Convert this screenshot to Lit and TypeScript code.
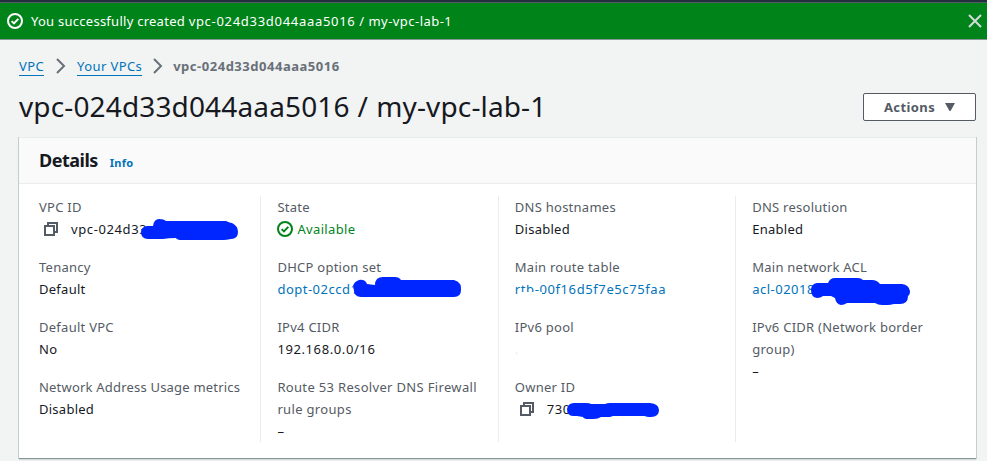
import { LitElement, html, css, nothing } from "lit";
import { customElement } from "lit/decorators.js";
import { classMap } from "lit/directives/class-map.js";

interface Field {
  label: string;
  fit?: "tight" | "wide";
  value?: string;
  kind?: "link" | "copyable" | "status" | "clipped" | "faint";
  mask?: { x: number; y: number; w: number; h: number; d: string };
}

// Each mask is drawn in its own box, offset from the top left of the value line.
const columns: Field[][] = [
  [
    {
      label: "VPC ID",
      value: "vpc-024d33",
      kind: "copyable",
      mask: {
        x: 101, y: 0, w: 100, h: 24,
        d: "M7 8H13Q14 1 19 1Q24 1 26 3H86Q90 5 92 5Q98 8 98 14Q98 21 91 21Q86 22 84 22H42Q37 22 36 20Q28 20 23 21H8Q1 21 1 14Q1 9 7 8Z",
      },
    },
    { label: "Tenancy", value: "Default" },
    { label: "Default VPC", value: "No" },
    { label: "Network Address Usage metrics", fit: "tight", value: "Disabled" },
  ],
  [
    { label: "State", value: "Available", kind: "status" },
    {
      label: "DHCP option set",
      value: "dopt-02ccd1",
      kind: "link",
      mask: {
        x: 75, y: -2, w: 112, h: 24,
        d: "M7 4Q13 3 15 8L23 9Q23 1 31 1H43Q47 1 49 4H102Q106 5 108 8Q109 9 109 14Q109 21 102 21H9Q2 21 2 14Q-1 7 7 4Z",
      },
    },
    { label: "IPv4 CIDR", value: "192.168.0.0/16" },
    { label: "Route 53 Resolver DNS Firewall rule groups", fit: "wide", value: "–" },
  ],
  [
    { label: "DNS hostnames", value: "Disabled" },
    { label: "Main route table", value: "rtb-00f16d5f7e5c75faa", kind: "clipped" },
    { label: "IPv6 pool", value: ".", kind: "faint" },
    {
      label: "Owner ID",
      value: "730",
      kind: "copyable",
      mask: {
        x: 51, y: 4, w: 96, h: 20,
        d: "M8 1H20Q24 1 25 2H39Q41 1 44 1H84Q93 2 93 8Q93 15 85 15Q80 15 79 14H47L44 15H35Q32 17 28 17H22Q18 17 17 15L11 14H7Q1 14 1 7Q2 1 8 1Z",
      },
    },
  ],
  [
    { label: "DNS resolution", value: "Enabled" },
    {
      label: "Main network ACL",
      value: "acl-02018",
      kind: "link",
      mask: {
        x: 58, y: -1, w: 104, h: 30,
        d: "M7 6H18Q20 1 25 1H48Q51 1 53 3H62Q67 3 70 7H92Q99 8 100 14Q100 18 98 19Q98 27 90 27H84Q80 28 78 28H72Q68 28 65 26H37Q34 28 31 28Q26 27 25 21L21 19H13Q11 21 7 21Q1 20 1 13Q1 7 7 6Z",
      },
    },
    { label: "IPv6 CIDR (Network border group)", value: "–" },
  ],
];

const checkIcon = html`<svg class="check" viewBox="0 0 16 16" width="16" height="16">
  <circle cx="8" cy="8" r="7" /><path d="M4.6 8.1 7 10.4 11.3 5.9" />
</svg>`;

const copyIcon = html`<svg class="copy" viewBox="0 0 14 14" width="14" height="14">
  <path d="M1 4H10V13H1ZM4 4V1H13V10H10" />
</svg>`;

const chevron = html`<svg class="chevron" viewBox="0 0 10 16" width="10" height="16">
  <path d="M1 1 8 8 1 15" />
</svg>`;

@customElement("app-root")
export class AppRoot extends LitElement {
  static styles = css`
    :host {
      display: block;
      height: 461px;
      overflow: hidden;
      background: #f2f3f3;
      color: #16191f;
      font: 13px/22px "Noto Sans", "Open Sans", sans-serif;
      letter-spacing: 0.26px;
    }
    * { box-sizing: border-box; }
    svg { display: block; fill: none; flex: none; }
    .digits { letter-spacing: 0.6px; }
    .topline { height: 3px; background: #232f3e; border-bottom: 1px solid #545b64; }
    .banner {
      height: 37px; display: flex; align-items: center; padding: 0 5px 0 7px;
      background: #00841a; border-bottom: 1px solid #879596; color: #fff;
    }
    .banner .message { flex: 1; margin-left: 8px; }
    .banner .digits { letter-spacing: 0.7px; }
    .banner .name { letter-spacing: 0.46px; }
    .check { stroke: currentColor; stroke-width: 2; }
    .close { stroke: #d5dbdb; stroke-width: 2; }
    .crumbs { display: flex; align-items: center; height: 22px; margin: 15px 19px 0; }
    .crumbs a {
      color: #0073bb; border-bottom: 1px solid #0073bb;
      line-height: 21px; height: 20px; letter-spacing: 0.4px;
    }
    .crumbs b { color: #687078; letter-spacing: 0.52px; }
    .chevron { stroke: #687078; stroke-width: 2; margin: 0 11px 0 12px; }
    .chevron ~ .chevron { margin: 0 10px 0 11px; }
    .heading { display: flex; justify-content: space-between; margin: 10px 11px 0 19px; height: 50px; }
    h1 {
      margin: 0; font-size: 28px; line-height: 38px; font-weight: 400;
      white-space: nowrap; letter-spacing: 0.14px; word-spacing: 0.6px;
    }
    button {
      width: 113px; height: 28px; margin-top: 6px; padding: 0; display: flex;
      align-items: center; justify-content: center; gap: 10px; background: #fff;
      border: 1px solid #545b64; border-radius: 2px; color: #545b64;
      font: 700 13px/20px "Noto Sans", sans-serif; letter-spacing: 0.4px;
    }
    .caret { fill: #545b64; }
    .card {
      margin: 0 11px 0 19px; height: 322px; background: #fff;
      border-top: 1px solid #eaeded; border-bottom: 1px solid #879596;
      box-shadow: -1px 0 0 #c5cccc, 1px 0 0 #c5cccc, 0 1px 1px #d5dbdb;
    }
    header {
      height: 46px; display: flex; align-items: baseline; padding: 8px 20px 0;
      background: #fafafa; border-bottom: 1px solid #eaeded;
    }
    h2 { margin: 0; font-size: 18px; line-height: 28px; letter-spacing: -0.5px; }
    .info { margin-left: 12px; color: #0073bb; font-size: 11px; font-weight: 700; }
    .grid { display: grid; grid-template-columns: repeat(4, 237.4px); padding: 12px 0 0 4px; }
    .column { height: 246px; padding: 0 16px; display: flex; flex-direction: column; gap: 16px; }
    .column + .column { border-left: 1px solid #eaeded; }
    .label { color: #545b64; }
    .tight { letter-spacing: 0.2px; }
    .wide { letter-spacing: 0.33px; margin-right: -6px; }
    .value { display: flex; align-items: center; height: 22px; position: relative; white-space: nowrap; }
    .link, .clipped { color: #0073bb; }
    .link .digits { letter-spacing: 0.5px; }
    .status { color: #00841a; gap: 4px; letter-spacing: 0.35px; }
    .copy { stroke: #545b64; stroke-width: 2; margin: 0 13px 0 5px; }
    .faint { color: #fae7d8; }
    .mask { position: absolute; fill: #0026ff; }
    .clipped::before {
      content: ""; position: absolute; left: 0; top: 3px; width: 29px; height: 4px; background: #fff;
    }
    .clipped::after {
      content: ""; position: absolute; left: 5px; top: 14px; width: 22px; height: 3px; background: #fff;
    }
  `;

  private field(f: Field) {
    const m = f.mask;
    return html`<div class="field">
      <div class=${classMap({ label: true, [f.fit ?? "regular"]: true })}>${f.label}</div>
      <div class=${classMap({ value: true, [f.kind ?? "plain"]: true })}>
        ${f.kind === "copyable" ? copyIcon : f.kind === "status" ? checkIcon : nothing}
        <span class=${classMap({ digits: /\d/.test(f.value ?? "") })}>${f.value}</span>
        ${m
          ? html`<svg class="mask" width=${m.w} height=${m.h} style="left:${m.x}px;top:${m.y}px">
              <path d=${m.d} />
            </svg>`
          : nothing}
      </div>
    </div>`;
  }

  render() {
    return html`
      <div class="topline"></div>
      <div class="banner">
        ${checkIcon}
        <span class="message">You successfully created <span class="digits">vpc-024d33d044aaa5016</span><span class="name"> / my-vpc-lab-1</span></span>
        <svg class="close" width="14" height="14"><path d="M1 1 13 13M13 1 1 13" /></svg>
      </div>
      <nav class="crumbs">
        <a>VPC</a>${chevron}<a>Your VPCs</a>${chevron}<b>vpc-024d33d044aaa5016</b>
      </nav>
      <div class="heading">
        <h1>vpc-024d33d044aaa5016 / my-vpc-lab-1</h1>
        <button>Actions <svg class="caret" width="10" height="8"><path d="M0 0H10L5.5 8H4.5Z" /></svg></button>
      </div>
      <section class="card">
        <header><h2>Details</h2><a class="info">Info</a></header>
        <div class="grid">
          ${columns.map((c) => html`<div class="column">${c.map((f) => this.field(f))}</div>`)}
        </div>
      </section>
    `;
  }
}
